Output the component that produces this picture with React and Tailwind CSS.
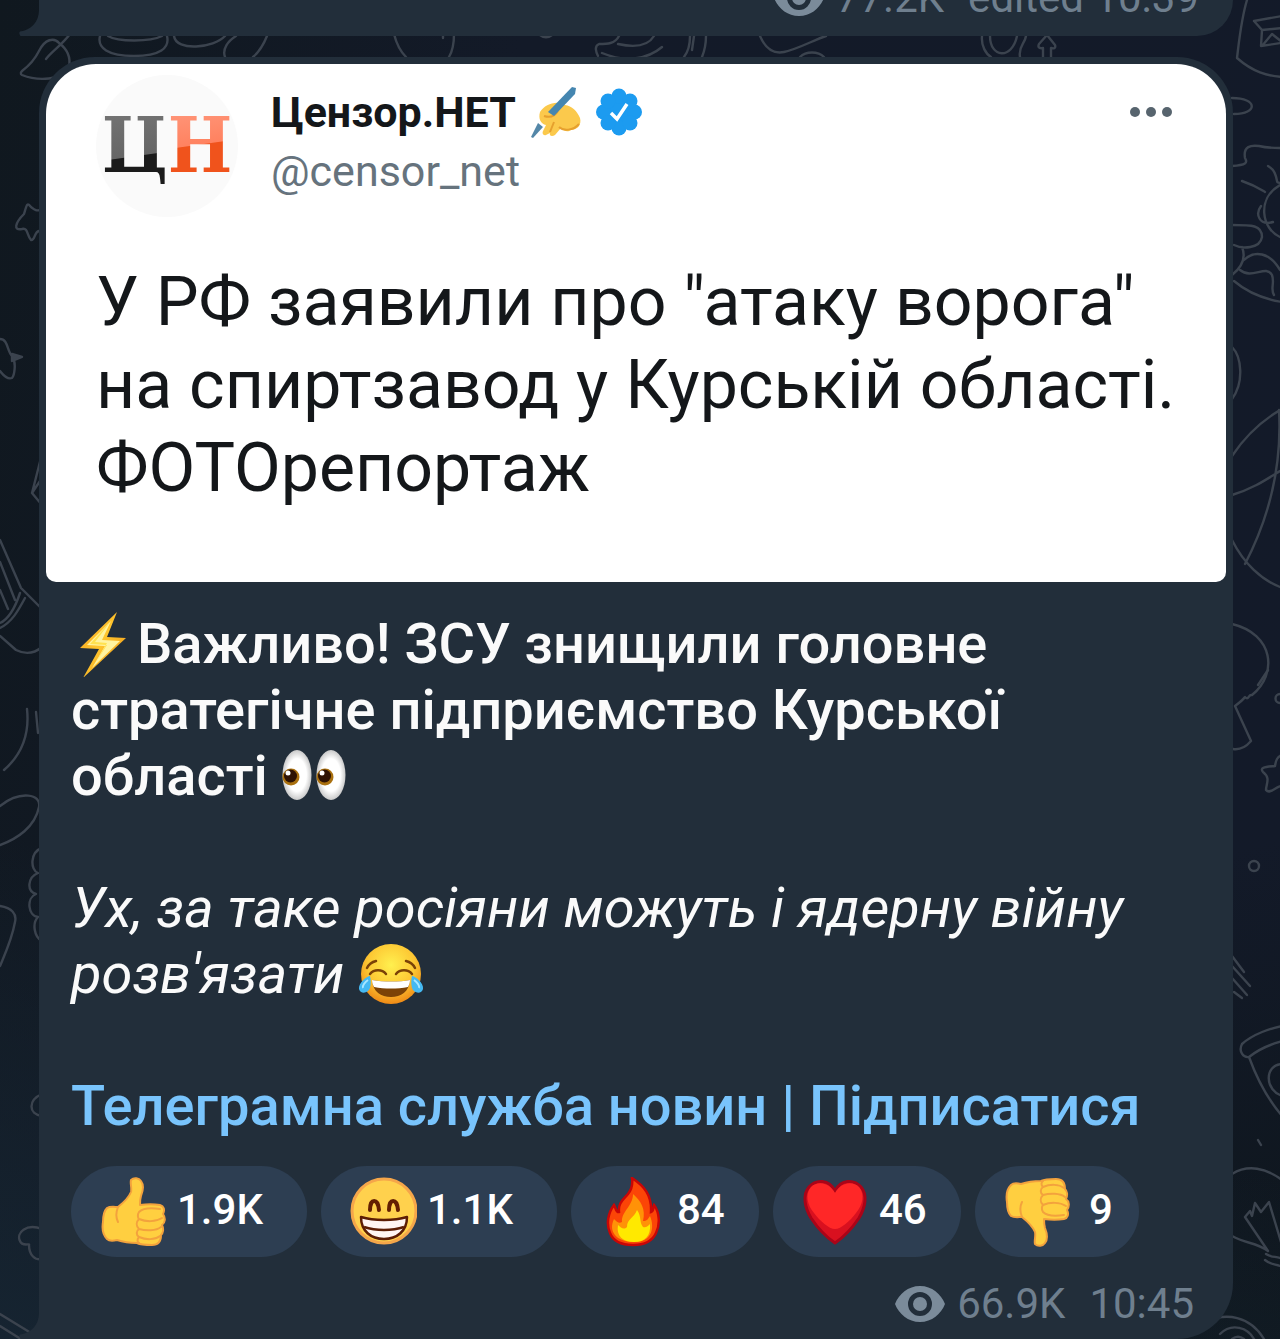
import React from "react";

function Doodles() {
  return (
    <svg
      className="absolute inset-0 h-full w-full"
      viewBox="0 0 1280 1339"
      preserveAspectRatio="xMidYMid slice"
      fill="none"
      stroke="#3b434e"
      strokeWidth="2.4"
      strokeLinecap="round"
      strokeLinejoin="round"
      aria-hidden="true"
    >
      {/* strip between the messages */}
      <path d="M46 59c6-8 15-13 24-25M22 71c8-6 13-12 17-20 6-12 15-14 20-8 8 6 12 14 10 24-6 14-32 14-47 8-2-1-1-3 0-4Z" />
      <path d="M100 36c-3 12 8 20 34 20s36-8 33-20M108 36c10 6 42 6 54 0M174 36c2 16 40 12 51 0M225 57c-3-8 3-16 11-21M267 36c-4 10-8 16-14 21M394 34c3 12 7 18 12 23M454 34c0 10-2 18-5 23M443 34v4M540 35c4 3 8 3 12 0" />
      <path d="M619 36c-4 8-12 8-20 8-5 2-3 8-1 12M618 44c18 4 30 2 36-8M602 53c24 10 46 6 60-6M690 36c0 8-2 16-6 21M694 36l-2 14M706 36c0 8-2 16-4 21M760 36c6 14 14 18 24 16 14-3 30-12 42-16M800 57c6-6 18-6 24 0M982 36c-1 10 4 18 9 21M990 36c0 22 22 24 27 0M1026 36c-1 8-8 10-6 21M1043 57v-9c-5 1-5-2-4-4l8-9 8 10c1 3-1 4-4 3v9" />
      {/* left edge */}
      <path d="M24 214c3-10 3-12 7-7 4 3 5 4 10 3M24 214c-9 9-11 17-2 15 6-2 5 7 9 11 4 1 3-8 8-9" />
      <path d="M0 339c8 0 7 12 12 17 5 7 2 20 0 22-5 2-9-3-12-7" />
      <path d="M12 354l10 3-10 4z" fill="#3b434e" />
      <path d="M42 454l-10 39 10 12M32 493l10-15M0 540l21 48 20 20M0 562l15 38M0 590l8 19M0 623c9-4 15-15 20-30M0 628c12-6 18-17 25-30M0 636l16 14c12 6 20 2 26-3" />
      <path d="M27 709c3 28-8 48-23 61M36 712l2 21M0 806c20-16 42-12 39 1-4 20-22 32-39 38M0 906c12 2 17 8 15 16-3 17-10 32-15 44" />
      <path d="M42 848c-12 4-12 22-4 25-10 4-12 18-2 21-10 4-8 22 2 23-6 6-4 20 4 24M42 1094c-14 6-14 20 0 22M42 1229c-16-6-26 4-22 12 2 6 10 2 9 4 0 10 6 16 14 14M0 1314l31 19M0 1326l24 15" />
      {/* right edge */}
      <path d="M1247 0c-6 20-8 42-10 58 16 14 30 18 46 19M1254 21l28-5M1254 21l8 9 20-2M1262 30l-1 16 20-3M1262 46l10-12 10 8" />
      <path d="M1232 98c26 0 26 16 2 16M1232 166c14-1 16-3 13-8-2-12 6-13 14-12 8 2 14 2 21 2M1268 166c7 4 8 10 9 15 0 2 2 2 4 2M1242 181c12 4 18 8 23 11M1280 185c-24 14-18 44 0 52M1261 206c-6 8-2 20 12 16" />
      <path d="M1232 225c20 0 30 0 30 12-2 12-20 12-28 8M1242 247c4 10 0 20-10 28M1244 260c10-10 26-8 36 10M1240 270c12 10 26-6 32 5 3 8-2 14 2 20M1234 281c14 12 30 18 48 21" />
      <path d="M1232 347c10 10 12 36 0 52M1232 456c12-18 28-34 48-46M1232 495c20-6 32-14 48-24M1279 410c3 54-8 104-34 154M1232 540c12 24 30 40 48 47M1232 624c42 10 46 50 20 71-4-1-3 6-7 2-2 3-6 6-10 9l16 35c-6 7-12 9-18 8" />
      <path d="M1268 670l-10 15M1280 694a4 4 0 0 0 0 9M1282 755c-5 2-6 5-7 11-9 1-16 1-12 6 8 6 3 12 3 18 4 5 10-4 16-4" />
      <circle cx="1254" cy="866" r="5" />
      <path d="M1232 956l12 16M1232 966l18 20M1232 978l15 17M1234 992l8 6" />
      <path d="M1283 1026c-12 2-30 8-41 18-4 8 2 14 7 13 10-8 22-13 34-16M1249 1057c8 22 20 44 34 60M1283 1064c-20 0-18 28 0 32M1258 1140l3 5M1232 1174c16-10 34-6 50 6M1232 1236c14 8 24 6 36 15M1268 1251l-23-34 5-6 2 5 3-13 6 9 8-10 12 40M1266 1254c6 4 10 2 14 4M1265 1260c6 5 10 4 15 6" />
      <path d="M1206 1322c20-10 44-6 58 17M1220 1334c12-12 28-6 34 5M1232 1339c4-3 8-3 12 0" />
    </svg>
  );
}

function Tail({ className }) {
  return (
    <svg className={className} width="20" height="26" viewBox="0 0 20 26" aria-hidden="true">
      <path d="M20 0v26H1.500C0 24 0 22 1 21.500C12 20 20 12 20 0Z" fill="#222e3a" />
    </svg>
  );
}

function Eye() {
  return (
    <svg width="50" height="36" viewBox="0 0 50 36" aria-hidden="true">
      <path
        fillRule="evenodd"
        fill="#7b8b9a"
        d="M25 0C13 0 4 8 0 18c4 10 13 18 25 18s21-8 25-18C46 8 37 0 25 0Zm0 6a12 12 0 1 1 0 24a12 12 0 0 1 0-24Z"
      />
      <circle cx="25" cy="18" r="7" fill="#7b8b9a" />
    </svg>
  );
}

function WritingHand() {
  return (
    <svg width="52" height="52" viewBox="0 0 52 52" role="img" aria-label="✍">
      <path d="M10 26c5-8 17-12 25-7c7 1 12 6 15 13c2 7-3 12-9 12c-4 3-8 0-10-2l-6 7c-3 2-6 1-5-2l-4 2c-3 1-4-2-3-4l3-6c-5-1-8-6-6-13Z" fill="#fbc94c" />
      <path d="M14 30c6 2 11 0 14-5M20 46l4-10M29 41c4 4 14 4 20-3" fill="none" stroke="#e6a02e" strokeWidth="2" />
      <path d="M42 1l4 1-1 6-21 22-6-4z" fill="#4586b0" />
      <path d="M8 37l5 4-10 11-2-1z" fill="#5487a8" />
    </svg>
  );
}

function Verified() {
  return (
    <svg width="46" height="48" viewBox="0 0 46 48" role="img" aria-label="Verified">
      <g fill="#1c9bf0">
        <circle cx="23" cy="24" r="18" />
        <circle cx="23" cy="8" r="7.500" />
        <circle cx="23" cy="40" r="7.500" />
        <circle cx="7.500" cy="24" r="7.500" />
        <circle cx="38.500" cy="24" r="7.500" />
        <circle cx="12" cy="13" r="7.500" />
        <circle cx="34" cy="13" r="7.500" />
        <circle cx="12" cy="35" r="7.500" />
        <circle cx="34" cy="35" r="7.500" />
      </g>
      <path d="M15 25l6 6 10-15" fill="none" stroke="#fff" strokeWidth="3.500" />
    </svg>
  );
}

function Bolt() {
  return (
    <svg className="inline-block align-top" width="66" height="66" viewBox="0 0 66 66" role="img" aria-label="⚡">
      <defs>
        <linearGradient id="bolt" x1="0" y1="0" x2="1" y2="1">
          <stop offset="0" stopColor="#f39a1d" />
          <stop offset=".45" stopColor="#ffc52d" />
          <stop offset="1" stopColor="#ea8f13" />
        </linearGradient>
      </defs>
      <path d="M46 1L9 37l19 1L12 67l43-40-19-1z" fill="url(#bolt)" />
      <path d="M40 10L16 34l18 1-13 22 28-27-18-1z" fill="#fff3a0" />
      <path d="M40 10L19 33l17 1-11 17 11-19-12-1z" fill="#ffe14f" />
    </svg>
  );
}

function Eyes() {
  return (
    <svg className="inline-block align-top" width="66" height="66" viewBox="0 0 66 66" role="img" aria-label="👀">
      <defs>
        <radialGradient id="ball">
          <stop offset=".65" stopColor="#fff" />
          <stop offset="1" stopColor="#c9c9c9" />
        </radialGradient>
      </defs>
      {[0, 34].map((x) => (
        <g key={x} transform={`translate(${x} 0)`}>
          <ellipse cx="15" cy="32" rx="14.500" ry="25" fill="url(#ball)" />
          <circle cx="9" cy="34" r="8.500" fill="#a9700f" />
          <circle cx="8.500" cy="33" r="6.500" fill="#2e1203" />
          <circle cx="6" cy="30" r="2.500" fill="#fff" />
        </g>
      ))}
    </svg>
  );
}

function Joy() {
  return (
    <svg className="inline-block align-top" width="66" height="66" viewBox="0 -2 66 66" role="img" aria-label="😂">
      <defs>
        <radialGradient id="joy" cx=".5" cy=".35" r=".65">
          <stop offset="0" stopColor="#fff04f" />
          <stop offset=".6" stopColor="#fdc733" />
          <stop offset="1" stopColor="#ef8a16" />
        </radialGradient>
      </defs>
      <circle cx="33" cy="31" r="30" fill="url(#joy)" />
      <path d="M14 37c12 2 27 2 38 0c-1 12-9 17-19 17s-18-5-19-17Z" fill="#7b4207" />
      <path d="M14 37c12 2 27 2 38 0c0 3-1 5-2 7c-11 2-23 2-34 0c-1-2-2-4-2-7Z" fill="#fff" />
      <path d="M12 31c4-5 12-5 16 0M38 31c4-5 12-5 16 0M9 25c2-4 5-6 9-7M48 18c4 1 7 3 9 7" fill="none" stroke="#7b4207" strokeWidth="2.500" strokeLinecap="round" />
      <path d="M12 33c-3 0-12 7-11 13c1 5 9 5 11-1c1-4 1-8 0-12ZM54 33c3 0 12 7 11 13c-1 5-9 5-11-1c-1-4-1-8 0-12Z" fill="#45b9f2" />
      <path d="M10 37c-3 2-6 6-5 8M56 37c3 2 6 6 5 8" fill="none" stroke="#a9e6ff" strokeWidth="2" />
    </svg>
  );
}

function Thumb({ down }) {
  return (
    <svg width="68" height="70" viewBox="0 0 68 70" aria-hidden="true">
      <g
        transform={down ? "matrix(1 0 0 -1 0 70)" : undefined}
        fill="#ffcf40"
        stroke="#f3a23d"
        strokeWidth="2"
        strokeLinejoin="round"
        strokeLinecap="round"
      >
        <path d="M19 30C24 26 30 20 32 15C33 11 31 6 32 3C35 0 40 1 42 4C45 8 44 14 42 19C41 22 41 25 41 28C48 27 55 27 61 28C65 29 66 33 64 37C67 41 66 46 63 48C65 52 64 56 62 58C62 64 59 68 53 68C47 68 42 68 38 66C31 66 24 65 18 63C14 64 10 64 8 62C4 58 3 51 4 45C4 39 5 34 8 31C11 29 16 30 19 30Z" />
        <path
          d="M19 30C17 35 17 41 19 45M61 32C54 31 44 31 40 35C38 38 39 41 40 42C37 45 37 49 40 52C37 54 37 58 40 60C38 62 38 65 40 66M40 42C47 45 57 45 63 41M40 52C47 54 57 54 62 50M40 60C47 63 56 63 61 59"
          fill="none"
        />
      </g>
    </svg>
  );
}

function Grin() {
  return (
    <svg width="68" height="70" viewBox="0 0 68 70" aria-hidden="true">
      <circle cx="35" cy="34" r="32" fill="#ffd14d" stroke="#f5a64a" strokeWidth="3" />
      <path d="M21 33c0-12 8-12 9 0M40 33c0-12 8-12 9 0" fill="none" stroke="#641f02" strokeWidth="4" strokeLinecap="round" />
      <path d="M12 40c13 4 33 4 46 0c0 14-10 22-23 22s-23-8-23-22Z" fill="#fff5f2" stroke="#5c1d04" strokeWidth="2.500" strokeLinejoin="round" />
      <path d="M15 50c12 4 28 4 40 0" fill="none" stroke="#5c1d04" strokeWidth="2.500" />
    </svg>
  );
}

function Fire() {
  return (
    <svg width="68" height="70" viewBox="0 0 68 70" aria-hidden="true">
      <path d="M33 1c12 8 20 17 19 34c3-1 2-5 3-7c6 8 6 20 2 28c-4 9-12 12-23 12c-12 0-20-4-23-12c-4-9-2-20 4-28c2 3 2 8 5 7c-1-9 4-12 9-18c4-5 5-9 4-16Z" fill="#fb4507" stroke="#c90606" strokeWidth="2.500" />
      <path d="M34 17c8 7 13 15 10 27c4 0 5-2 7-5c5 12 2 26-16 26S9 54 15 42c3 3 5 5 8 3c-1-10 11-16 11-28Z" fill="#ff9207" />
      <path d="M38 33c5 7 2 12 6 17c3 1 5-1 7-3c1 12-5 18-16 18s-18-6-16-17c3 3 6 5 9 2c0-8 7-9 10-17Z" fill="#ffe900" />
    </svg>
  );
}

function Heart() {
  return (
    <svg width="68" height="70" viewBox="0 0 68 70" aria-hidden="true">
      <path d="M34 14C28 2 15 2 8 10c-7 8-4 21 2 31c6 9 15 19 24 25c9-6 18-16 24-25c6-10 9-23 2-31c-7-8-20-8-26 4Z" fill="#d9101f" stroke="#aa0418" strokeWidth="3" strokeLinejoin="round" />
      <path d="M34 16C29 6 17 3 10 10c-6 7-4 18 3 26c6 8 15 16 21 16s15-8 21-16c7-8 9-19 3-26c-7-7-19-4-24 6Z" fill="#ff2727" />
    </svg>
  );
}

const reactions = [
  { name: "Thumbs up", icon: <Thumb />, count: "1.9K", size: "w-[236px]", gap: "pl-2.5" },
  { name: "Grin", icon: <Grin />, count: "1.1K", size: "w-[236px]", gap: "pl-2.5" },
  { name: "Fire", icon: <Fire />, count: "84", size: "w-[188px]", gap: "pl-2.5" },
  { name: "Heart", icon: <Heart />, count: "46", size: "w-[188px]", gap: "pl-2.5" },
  { name: "Thumbs down", icon: <Thumb down />, count: "9", size: "w-[164px]", gap: "pl-[18px]" },
];

export default function App() {
  return (
    <div className="relative min-h-screen overflow-hidden bg-[linear-gradient(100deg,#10181f_0%,#131a28_35%,#131a29_100%)] pr-[47px] pl-[39px] font-[Roboto,sans-serif]">
      <div className="absolute inset-0 bg-[linear-gradient(15deg,#162431_0%,transparent_30%),linear-gradient(345deg,#0e161c_0%,transparent_30%)]" />
      <Doodles />

      <div className="relative flex h-9 items-end justify-end rounded-br-[56px] bg-[#222e3a] pr-[34px]">
        <Tail className="absolute bottom-0 -left-5" />
        <div className="flex items-center pb-[13px] text-[42px] leading-[50px] text-[#6f7f8e]">
          <Eye />
          <span className="pl-3">77.2K</span>
          <span className="pl-6">edited 10:39</span>
        </div>
      </div>

      <article className="relative mt-[21px] rounded-t-[56px] rounded-br-[56px] bg-[#222e3a] p-[7px] pb-2.5">
        <Tail className="absolute bottom-0 -left-5" />

        <section className="rounded-t-[50px] rounded-b-[10px] bg-white px-[50px] pt-[11px] pb-[69px] text-[#14171a]">
          <header className="flex items-start">
            <div className="flex size-[142px] items-center justify-center rounded-full bg-[#fafafa] font-['DejaVu_Serif_Condensed','DejaVu_Serif',serif] text-[76px] leading-[88px] font-bold">
              <span className="bg-[linear-gradient(172deg,#777_0%,#666_60%,#1b1b1b_61%,#1b1b1b_100%)] bg-clip-text text-transparent">Ц</span>
              <span className="bg-[linear-gradient(172deg,#ff9b80_0%,#ff8260_48%,#f0531c_49%,#f0531c_100%)] bg-clip-text text-transparent">Н</span>
            </div>
            <div className="flex-1 pt-2.5 pl-[33px]">
              <div className="flex items-center gap-3.5">
                <h2 className="text-[43px] leading-[54px] font-bold">Цензор.НЕТ</h2>
                <WritingHand />
                <Verified />
              </div>
              <p className="pt-[5px] text-[43px] leading-[54px] text-[#66737d]">@censor_net</p>
            </div>
            <button type="button" aria-label="More" className="mt-8 mr-1 flex gap-1.5">
              <span className="size-2.5 rounded-full bg-[#57646e]" />
              <span className="size-2.5 rounded-full bg-[#57646e]" />
              <span className="size-2.5 rounded-full bg-[#57646e]" />
            </button>
          </header>
          <p className="-mr-10 pt-11 pb-[3px] text-[68px] leading-[83px]">
            У РФ заявили про "атаку ворога"
            <br />
            на спиртзавод у Курській області.
            <br />
            ФОТОрепортаж
          </p>
        </section>

        <div className="px-[25px] pt-[29px] text-[56px] leading-[66px] text-[#fafafa]">
          <p className="font-medium">
            <Bolt />
            Важливо! ЗСУ знищили головне стратегічне підприємство Курської області <Eyes />
          </p>
          <p className="pt-[66px] italic">
            Ух, за таке росіяни можуть і ядерну війну розв'язати <Joy />
          </p>
          <p className="pt-[66px] font-medium">
            <a href="#subscribe" className="text-[#79c4fc]">
              Телеграмна служба новин | Підписатися
            </a>
          </p>
        </div>

        <div className="flex flex-wrap gap-3.5 pt-[27px] pl-[25px]">
          {reactions.map((r) => (
            <button
              key={r.name}
              type="button"
              aria-label={`${r.name} ${r.count}`}
              className={`flex h-[91px] items-center rounded-full bg-[#2d3e52] pl-7 ${r.size}`}
            >
              {r.icon}
              <span className={`pb-1 text-[42px] leading-[50px] font-medium text-white ${r.gap}`}>{r.count}</span>
            </button>
          ))}
        </div>

        <footer className="flex items-center justify-end pt-[22px] pr-8 text-[42px] leading-[50px] text-[#6f7f8e]">
          <Eye />
          <span className="pl-3">66.9K</span>
          <time className="pl-6">10:45</time>
        </footer>
      </article>
    </div>
  );
}
